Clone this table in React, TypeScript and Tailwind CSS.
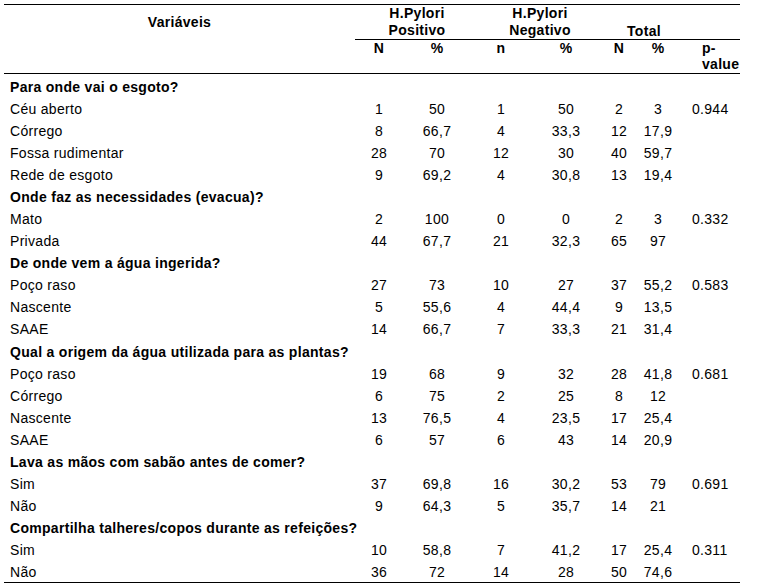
import React from 'react'

type Row = [string, string, string, string, string, string, string, string]

interface Section {
  title: string
  rows: Row[]
}

const sections: Section[] = [
  {
    title: 'Para onde vai o esgoto?',
    rows: [
      ['Céu aberto', '1', '50', '1', '50', '2', '3', '0.944'],
      ['Córrego', '8', '66,7', '4', '33,3', '12', '17,9', ''],
      ['Fossa rudimentar', '28', '70', '12', '30', '40', '59,7', ''],
      ['Rede de esgoto', '9', '69,2', '4', '30,8', '13', '19,4', ''],
    ],
  },
  {
    title: 'Onde faz as necessidades (evacua)?',
    rows: [
      ['Mato', '2', '100', '0', '0', '2', '3', '0.332'],
      ['Privada', '44', '67,7', '21', '32,3', '65', '97', ''],
    ],
  },
  {
    title: 'De onde vem a água ingerida?',
    rows: [
      ['Poço raso', '27', '73', '10', '27', '37', '55,2', '0.583'],
      ['Nascente', '5', '55,6', '4', '44,4', '9', '13,5', ''],
      ['SAAE', '14', '66,7', '7', '33,3', '21', '31,4', ''],
    ],
  },
  {
    title: 'Qual a origem da água utilizada para as plantas?',
    rows: [
      ['Poço raso', '19', '68', '9', '32', '28', '41,8', '0.681'],
      ['Córrego', '6', '75', '2', '25', '8', '12', ''],
      ['Nascente', '13', '76,5', '4', '23,5', '17', '25,4', ''],
      ['SAAE', '6', '57', '6', '43', '14', '20,9', ''],
    ],
  },
  {
    title: 'Lava as mãos com sabão antes de comer?',
    rows: [
      ['Sim', '37', '69,8', '16', '30,2', '53', '79', '0.691'],
      ['Não', '9', '64,3', '5', '35,7', '14', '21', ''],
    ],
  },
  {
    title: 'Compartilha talheres/copos durante as refeições?',
    rows: [
      ['Sim', '10', '58,8', '7', '41,2', '17', '25,4', '0.311'],
      ['Não', '36', '72', '14', '28', '50', '74,6', ''],
    ],
  },
]

// column widths shared by header and body
const cols = 'grid grid-cols-[351px_48px_68px_60px_70px_36px_42px_61px]'

function DataRow({ row }: { row: Row }) {
  const [label, ...vals] = row
  return (
    <div className={`${cols} h-[22.09px] items-end leading-[15px] pb-[1.5px]`}>
      <div className="pl-[6px]">{label}</div>
      {vals.slice(0, 6).map((v, i) => (
        <div key={i} className="text-center">{v}</div>
      ))}
      <div className="pl-[13px]">{vals[6]}</div>
    </div>
  )
}

export default function App() {
  return (
    <div
      className="w-[770px] h-[588px] bg-white text-black pl-[4px] pt-[4px] text-[14px] tracking-[0.3px]"
      style={{ fontFamily: '"Liberation Sans", Arial, sans-serif' }}
    >
      <div className="w-[736px]">
        {/* Header */}
        <div className={`${cols} border-t border-b border-black font-bold leading-[16.5px]`}>
          <div className="h-[35px] flex items-center justify-center">Variáveis</div>
          <div className="col-span-2 h-[35px] border-b border-black text-center pl-[8px]">
            H.Pylori<br />Positivo
          </div>
          <div className="col-span-2 h-[35px] border-b border-black text-center pl-[8px]">
            H.Pylori<br />Negativo
          </div>
          <div className="col-span-2 h-[35px] border-b border-black flex items-end justify-center pl-[8px]">
            Total
          </div>
          <div className="h-[35px] border-b border-black" />

          <div className="h-[33px]" />
          <div className="text-center leading-[16px]">N</div>
          <div className="text-center leading-[16px]">%</div>
          <div className="text-center leading-[16px]">n</div>
          <div className="text-center leading-[16px]">%</div>
          <div className="text-center leading-[16px]">N</div>
          <div className="text-center leading-[16px]">%</div>
          <div className="pl-[23px] leading-[16px]">
            p-<br />value
          </div>
        </div>

        {/* Body */}
        <div className="border-b border-black">
          {sections.map(s => (
            <div key={s.title}>
              <div className="h-[22.09px] flex items-end leading-[15px] pb-[1.5px] pl-[6px] font-bold">
                {s.title}
              </div>
              {s.rows.map((r, i) => (
                <DataRow key={i} row={r} />
              ))}
            </div>
          ))}
        </div>
      </div>
    </div>
  )
}
